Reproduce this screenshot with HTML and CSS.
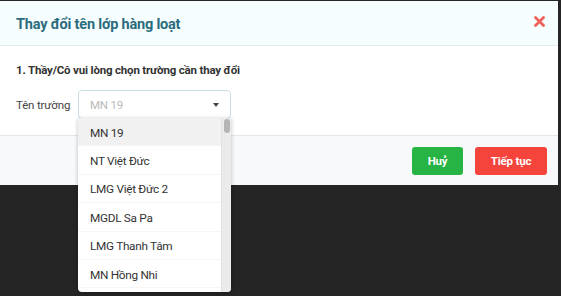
FILE: index.html
```html
<!DOCTYPE html>
<html lang="vi">
<head>
  <meta charset="UTF-8">
  <title>Thay đổi tên lớp hàng loạt</title>
  <link rel="stylesheet" href="styles.css">
</head>
<body>
  <div class="backdrop">
    <div class="modal">
      <div class="modal-header">
        <h2>Thay đổi tên lớp hàng loạt</h2>
        <svg class="close" width="11" height="11" viewBox="0 0 11 11">
          <path d="M1.5 1.5 L9.5 9.5 M9.5 1.5 L1.5 9.5" stroke="#f0605a" stroke-width="2.8" stroke-linecap="round"/>
        </svg>
      </div>

      <div class="modal-body">
        <p class="step">1. Thầy/Cô vui lòng chọn trường cần thay đổi</p>
        <div class="field">
          <label>Tên trường</label>
          <div class="select">
            <span class="placeholder">MN 19</span>
            <span class="caret"></span>
          </div>
        </div>
      </div>

      <div class="modal-footer">
        <button class="btn btn-cancel">Huỷ</button>
        <button class="btn btn-next">Tiếp tục</button>
      </div>
    </div>

    <!-- open list of the select, lies over the modal -->
    <div class="dropdown">
      <ul class="options">
        <li class="active">MN 19</li>
        <li>NT Việt Đức</li>
        <li>LMG Việt Đức 2</li>
        <li>MGDL Sa Pa</li>
        <li>LMG Thanh Tâm</li>
        <li>MN Hồng Nhi</li>
      </ul>
      <div class="scrollbar"><div class="thumb"></div></div>
    </div>
  </div>
</body>
</html>
```

FILE: styles.css
```css
html, body {
  height: 100%;
}

body {
  margin: 0;
  background: #252525;
  font-family: Roboto, "Noto Sans", sans-serif;
  color: #333;
}

.backdrop {
  position: relative;
  height: 100%;
  padding-top: 1px;
  box-sizing: border-box;
  background: #252525;
}

.modal {
  width: 558px;
  background: #fff;
  border-radius: 0 0 3px 0;
}

.modal-header {
  height: 44px;
  display: flex;
  align-items: center;
  justify-content: space-between;
  padding: 0 13px 0 16px;
  background: #f5fdfe;
  border-bottom: 1px solid #e3edf0;
}

.modal-header h2 {
  margin: 0;
  margin-top: 3px;
  font-size: 14.5px;
  letter-spacing: -0.2px;
  font-weight: 700;
  color: #2b6c7d;
}

.close {
  margin-top: -3px;
}

.modal-body {
  height: 89px;
  padding: 0 16px;
}

.step {
  margin: 0;
  padding-top: 17px;
  font-size: 11.5px;
  letter-spacing: -0.18px;
  font-weight: 700;
  color: #333;
}

.field {
  display: flex;
  align-items: center;
  margin-top: 13px;
}

.field label {
  width: 62px;
  font-size: 11.5px;
  letter-spacing: -0.15px;
  color: #444;
}

.select {
  width: 130px;
  height: 27px;
  border: 1px solid #c9dfe5;
  border-radius: 4px;
  display: flex;
  align-items: center;
  justify-content: space-between;
  padding: 0 10px 0 11px;
}

.placeholder {
  font-size: 11.5px;
  letter-spacing: -0.2px;
  color: #b9b9b9;
}

.caret {
  width: 0;
  height: 0;
  border-left: 3.5px solid transparent;
  border-right: 3.5px solid transparent;
  border-top: 4px solid #444;
  margin-right: 1px;
}

.dropdown {
  position: absolute;
  top: 118px;
  left: 78px;
  width: 153px;
  height: 174px;
  overflow: hidden;
  display: flex;
  background: #fff;
  border-radius: 0 0 4px 4px;
  box-shadow: 0 1px 4px rgba(0, 0, 0, 0.25);
}

.options {
  list-style: none;
  margin: 0;
  padding: 0;
  flex: 1;
}

.options li {
  height: 28.4px;
  display: flex;
  align-items: center;
  padding: 2px 0 0 12px;
  font-size: 11.8px;
  letter-spacing: -0.3px;
  color: #333;
  border-bottom: 1px solid #f6f6f6;
  box-sizing: border-box;
}

.options li.active {
  background: #f1f1f1;
}

.scrollbar {
  width: 9px;
  background: #ebebeb;
  border-left: 1px solid #e2e2e2;
  padding-top: 1px;
}

.thumb {
  width: 6px;
  height: 14px;
  margin: 0 auto;
  background: #b4b4b4;
  border-radius: 3px;
}

.modal-footer {
  height: 49px;
  display: flex;
  align-items: center;
  justify-content: flex-end;
  gap: 12px;
  padding: 0 11px;
  background: #f8f9fa;
  border-top: 1px solid #e5e8ea;
}

.btn {
  height: 28px;
  border: none;
  border-radius: 3px;
  color: #fff;
  font-family: Roboto, sans-serif;
  font-size: 11.5px;
  letter-spacing: -0.2px;
  font-weight: 700;
}

.btn-cancel {
  width: 51px;
  background: #27b444;
}

.btn-next {
  width: 72px;
  background: #f4443c;
}
```
